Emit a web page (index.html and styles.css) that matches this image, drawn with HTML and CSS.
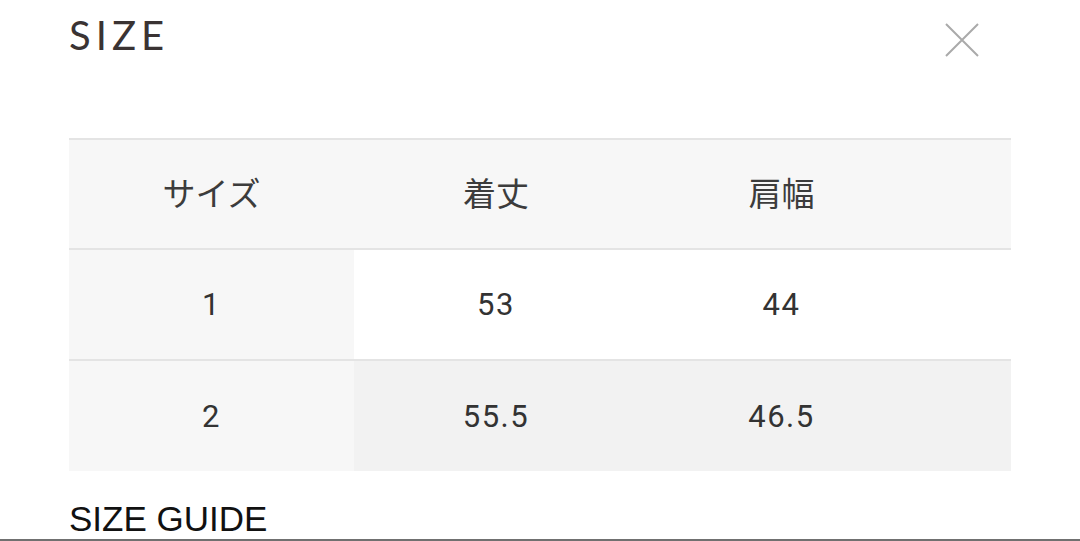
FILE: index.html
```html
<!DOCTYPE html>
<html lang="ja">
<head>
<meta charset="utf-8">
<link rel="stylesheet" href="styles.css">
</head>
<body>
<div class="modal">
  <header class="head">
    <h1 class="title">SIZE</h1>
    <button class="close" aria-label="close">
      <svg width="34" height="34" viewBox="0 0 34 34"><path d="M1 1 L33 33 M33 1 L1 33" stroke="#aaaaaa" stroke-width="2" fill="none"/></svg>
    </button>
  </header>
  <div class="table">
    <div class="row row-head">
      <div class="cell">サイズ</div>
      <div class="cell">着丈</div>
      <div class="cell">肩幅</div>
      <div class="cell"></div>
    </div>
    <div class="row row-odd">
      <div class="cell first">1</div>
      <div class="cell num">53</div>
      <div class="cell num">44</div>
      <div class="cell"></div>
    </div>
    <div class="row row-even">
      <div class="cell first">2</div>
      <div class="cell num">55.5</div>
      <div class="cell num">46.5</div>
      <div class="cell"></div>
    </div>
  </div>
  <div class="guide">SIZE GUIDE</div>
  <div class="bottom-line"></div>
</div>
</body>
</html>
```
FILE: styles.css
```css
html, body {
  margin: 0;
  padding: 0;
  background: #ffffff;
}
.modal {
  width: 1080px;
  height: 541px;
  overflow: hidden;
  display: flex;
  flex-direction: column;
}
.head {
  height: 138px;
  display: flex;
  justify-content: space-between;
  align-items: flex-start;
  padding: 0 101px 0 69px;
  box-sizing: border-box;
}
.title {
  margin: 11px 0 0 0;
  font-family: "Lato", "Noto Sans", sans-serif;
  font-weight: 400;
  font-size: 40px;
  line-height: 48px;
  letter-spacing: 5px;
  color: #3a3333;
}
.close {
  margin-top: 23px;
  padding: 0;
  border: 0;
  background: none;
  width: 34px;
  height: 34px;
  display: flex;
}
.table {
  margin: 0 69px;
  display: flex;
  flex-direction: column;
  font-family: "Roboto", "Noto Sans CJK JP", sans-serif;
  font-size: 31px;
  color: #333333;
}
.row {
  display: grid;
  grid-template-columns: 285px 284px 287px 1fr;
}
.row-head {
  height: 112px;
  background: #f7f7f7;
  border-top: 2px solid #e4e4e4;
  border-bottom: 2px solid #e4e4e4;
  box-sizing: border-box;
  font-family: "Noto Sans CJK JP", sans-serif;
  font-size: 33px;
  color: #3c3c3c;
}
.row-odd {
  height: 111px;
  background: #ffffff;
  border-bottom: 2px solid #e4e4e4;
  box-sizing: border-box;
}
.row-even {
  height: 110px;
  background: #f2f2f2;
}
.cell {
  display: flex;
  align-items: center;
  justify-content: center;
}
.row-head .cell {
  padding-bottom: 5px;
}
.cell.first {
  background: #f7f7f7;
}
.num, .first {
  letter-spacing: 1.5px;
}
.guide {
  flex: 1;
  display: flex;
  align-items: flex-end;
  padding: 0 0 0 69px;
  font-family: "Liberation Sans", Arial, sans-serif;
  font-size: 35px;
  line-height: 40px;
  color: #111111;
}
.bottom-line {
  height: 2px;
  background: #707070;
}
```
